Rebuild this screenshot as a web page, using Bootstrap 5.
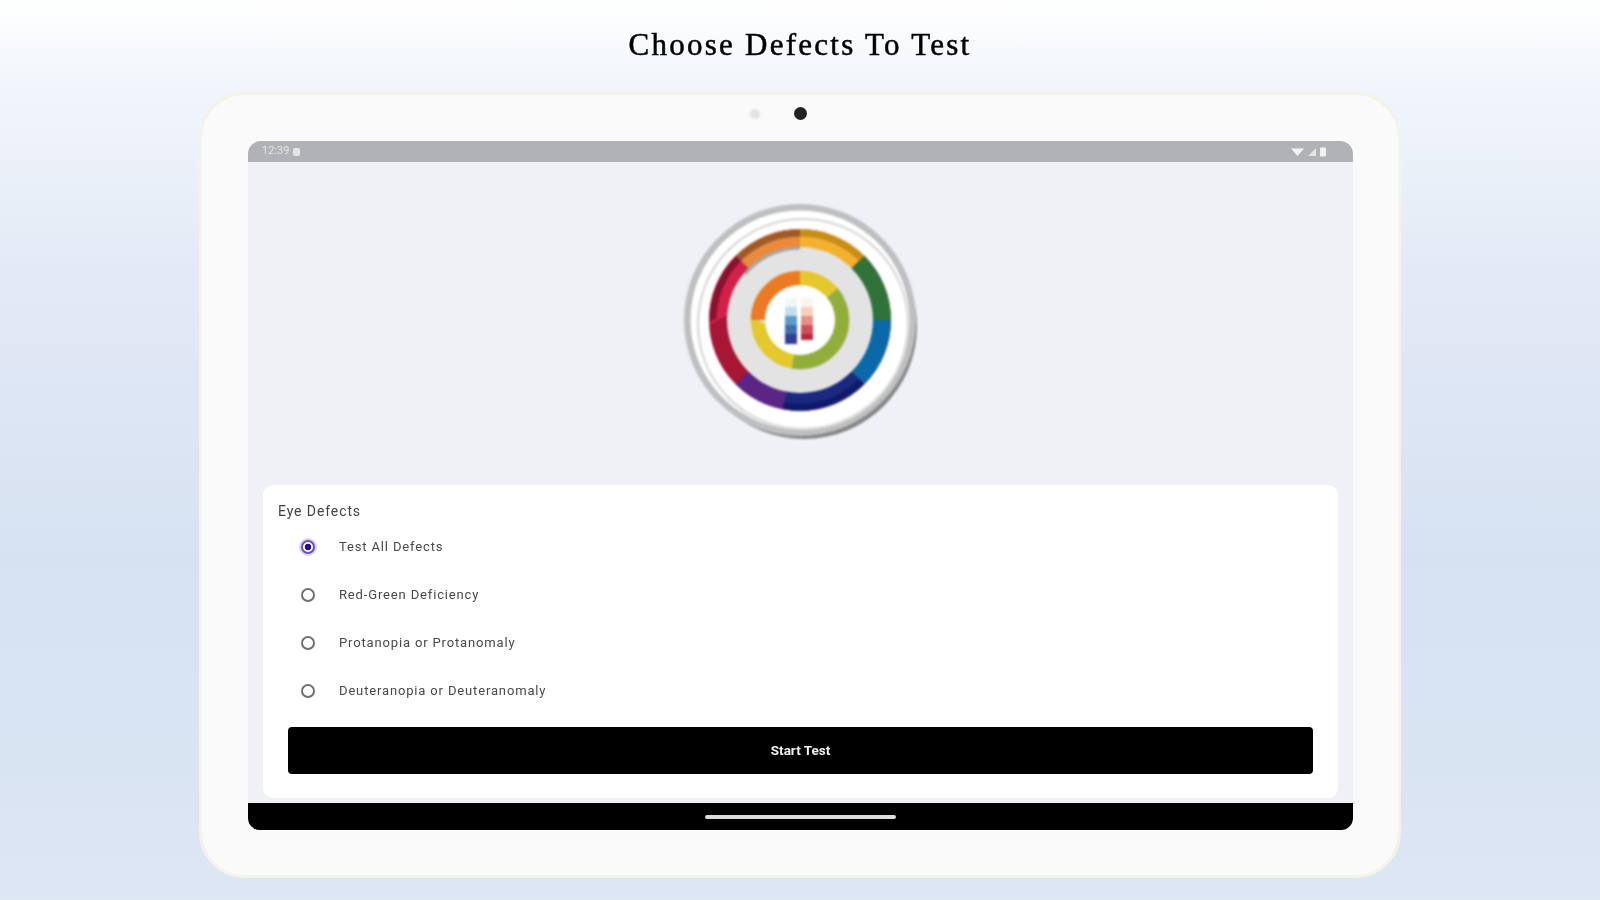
<!DOCTYPE html>
<html lang="en">
<head>
<meta charset="utf-8">
<title>Choose Defects To Test</title>
<link href="https://cdn.jsdelivr.net/npm/bootstrap@5.3.0/dist/css/bootstrap.min.css" rel="stylesheet">
<style>
html,body{height:100%;}
body{height:900px;overflow:hidden;font-family:Roboto,"Liberation Sans",sans-serif;
  background:linear-gradient(180deg,#fff 0,#f2f6fb 9%,#e3eaf6 30%,#d6e2f2 62%,#d9e4f3 85%,#dee7f4 100%);}
.shot-title{height:92px;font-family:"Liberation Serif",serif;font-size:31px;letter-spacing:2.25px;color:#000;padding-bottom:3px;-webkit-text-stroke:.5px #000;filter:blur(.6px);}
.tablet{width:1202px;height:786px;background:#fafafa;border:3px solid #f5f2e8;border-radius:46px;padding:0 45px 0 46px;}
.dots-row{height:46px;gap:34px;padding:0 44px 9px 0;}
.dot-off{width:10px;height:10px;border-radius:50%;background:#e2e2e2;filter:blur(1px);}
.dot-on{width:13px;height:13px;border-radius:50%;background:#222;filter:blur(.5px);}
.screen{height:689px;background:#f0f1f6;border-radius:13px 13px 12px 12px;overflow:hidden;}
.status{height:21px;background:#b1b2b6;padding:0 24px 0 14px;color:#e4e4e6;font-size:11px;}
.status-inner{filter:blur(.7px);}
.status-chip{width:7px;height:8px;background:#e6e6e8;border-radius:2px;}
.logo-area{height:323px;padding-bottom:6px;}
.logo-svg{display:block;filter:blur(1px);}
.panel{height:313px;margin:0 15px;background:#fff;border-radius:10px;padding:16px 25px 24px 15px;}
.panel-title{height:22px;line-height:20px;font-size:14px;letter-spacing:.9px;color:#444;filter:blur(.7px);}
.radio-row{height:48px;padding-left:23px;margin:0;}
.radio-row .form-check-input{width:14px;height:14px;margin:0 24px 0 0;float:none;border:2px solid #707070;filter:blur(.7px);flex:none;}
.radio-row .form-check-input:checked{border-color:#6a50b5;background-color:#fff;background-image:radial-gradient(circle,#2a0d8e 0 3px,transparent 3.6px);box-shadow:0 0 0 2px #dcd5f0;}
.radio-row .form-check-label{font-size:13px;letter-spacing:.85px;color:#4a4a4a;filter:blur(.7px);}
.start-btn{width:1025px;height:47px;margin:12px 0 0 10px;padding:0;background:#000;border:0;border-radius:4px;color:#eee;font-size:13.500px;font-weight:700;filter:blur(.3px);}
.start-btn span{display:block;filter:blur(.6px);}
.nav-strip{height:27px;margin-top:5px;background:#000;}
.home-bar{width:191px;height:4px;background:#ddd;border-radius:2px;filter:blur(.4px);}
</style>
</head>
<body class="d-flex flex-column align-items-center">
<h1 class="shot-title m-0 fw-normal d-flex align-items-center justify-content-center">Choose Defects To Test</h1>
<div class="tablet">
  <div class="dots-row d-flex align-items-center justify-content-center">
    <span class="dot-off"></span><span class="dot-on"></span>
  </div>
  <div class="screen d-flex flex-column">
    <div class="status d-flex align-items-center justify-content-between">
      <div class="status-inner d-flex align-items-center gap-1"><span>12:39</span><span class="status-chip"></span></div>
      <svg class="status-inner" width="40" height="12" viewBox="0 0 40 12">
        <path d="M2 2.500h13L8.500 10z" fill="#f2f2f4"/>
        <path d="M19 10l8-8v8z" fill="#e4e4e6"/>
        <rect x="31" y="1.500" width="6" height="9" rx="1" fill="#f2f2f4"/>
      </svg>
    </div>
    <div class="logo-area d-flex align-items-center justify-content-center">
      <svg class="logo-svg" width="240" height="240" viewBox="-119 -119 240 240" role="img" aria-label="Color test logo">
        <circle cx="4" cy="6" r="113" fill="#858585"/>
        <circle cx="0" cy="0" r="116" fill="#bebfc0"/>
        <circle cx="0" cy="0" r="109.500" fill="#fff"/>
        <circle cx="3" cy="4" r="105" fill="none" stroke="#dcdcdc" stroke-width="2.500"/>
        <circle r="81.500" fill="none" stroke="#a81535" stroke-width="19"/>
        <g fill="none" stroke-width="19" transform="rotate(-90)">
          <circle r="81.500" pathLength="360" stroke="#f2b230" stroke-dasharray="45 315"/>
          <circle r="81.500" pathLength="360" stroke="#2f7339" stroke-dasharray="45 315" stroke-dashoffset="-45"/>
          <circle r="81.500" pathLength="360" stroke="#0a69a8" stroke-dasharray="45 315" stroke-dashoffset="-90"/>
          <circle r="81.500" pathLength="360" stroke="#1b2a80" stroke-dasharray="56 304" stroke-dashoffset="-135"/>
          <circle r="81.500" pathLength="360" stroke="#5a2585" stroke-dasharray="34 326" stroke-dashoffset="-191"/>
          <circle r="81.500" pathLength="360" stroke="#d42048" stroke-dasharray="45 315" stroke-dashoffset="-270"/>
          <circle r="81.500" pathLength="360" stroke="#ea8a3c" stroke-dasharray="45 315" stroke-dashoffset="-315"/>
        </g>
        <g fill="none" stroke-width="7" transform="rotate(-90)">
          <circle r="87" pathLength="360" stroke="#c78e16" stroke-dasharray="45 315"/>
          <circle r="87" pathLength="360" stroke="#9e5a26" stroke-dasharray="45 315" stroke-dashoffset="-315"/>
          <circle r="87" pathLength="360" stroke="#8a1030" stroke-dasharray="45 315" stroke-dashoffset="-270"/>
          <circle r="87" pathLength="360" stroke="#0f1a6a" stroke-dasharray="56 304" stroke-dashoffset="-135"/>
        </g>
        <circle cx="0" cy="0" r="73" fill="#e3e3e3"/>
        <path d="M-55 -46A72 72 0 0 1 0 -72" fill="none" stroke="#a5a5a5" stroke-width="3"/>
        <g fill="none" stroke-width="14.500" transform="rotate(-90)">
          <circle r="42" pathLength="360" stroke="#e3c92c" stroke-dasharray="50 310"/>
          <circle r="42" pathLength="360" stroke="#92ae3a" stroke-dasharray="140 220" stroke-dashoffset="-50"/>
          <circle r="42" pathLength="360" stroke="#e3c92c" stroke-dasharray="80 280" stroke-dashoffset="-190"/>
          <circle r="42" pathLength="360" stroke="#ec7a22" stroke-dasharray="90 270" stroke-dashoffset="-270"/>
        </g>
        <circle r="35" fill="#fff"/>
        <g>
          <rect x="-15" y="-22" width="12" height="9" fill="#eef6fa"/>
          <rect x="-15" y="-13" width="12" height="9" fill="#c0dfee"/>
          <rect x="-15" y="-4" width="12" height="9" fill="#5c9ccb"/>
          <rect x="-15" y="5" width="12" height="9" fill="#3f6fb0"/>
          <rect x="-15" y="14" width="12" height="10" fill="#2e3f95"/>
          <rect x="1" y="-22" width="12" height="9" fill="#fdf3ec"/>
          <rect x="1" y="-13" width="12" height="9" fill="#f8cfbd"/>
          <rect x="1" y="-4" width="12" height="9" fill="#ea8f86"/>
          <rect x="1" y="5" width="12" height="9" fill="#cf4f58"/>
          <rect x="1" y="14" width="12" height="6" fill="#b8283c"/>
        </g>
      </svg>
    </div>
    <div class="panel">
      <div class="panel-title">Eye Defects</div>
      <div class="form-check radio-row d-flex align-items-center">
        <input class="form-check-input" type="radio" name="defect" id="d1" checked>
        <label class="form-check-label" for="d1">Test All Defects</label>
      </div>
      <div class="form-check radio-row d-flex align-items-center">
        <input class="form-check-input" type="radio" name="defect" id="d2">
        <label class="form-check-label" for="d2">Red-Green Deficiency</label>
      </div>
      <div class="form-check radio-row d-flex align-items-center">
        <input class="form-check-input" type="radio" name="defect" id="d3">
        <label class="form-check-label" for="d3">Protanopia or Protanomaly</label>
      </div>
      <div class="form-check radio-row d-flex align-items-center">
        <input class="form-check-input" type="radio" name="defect" id="d4">
        <label class="form-check-label" for="d4">Deuteranopia or Deuteranomaly</label>
      </div>
      <button type="button" class="btn start-btn"><span>Start Test</span></button>
    </div>
    <div class="nav-strip d-flex align-items-center justify-content-center">
      <span class="home-bar"></span>
    </div>
  </div>
</div>
</body>
</html>
